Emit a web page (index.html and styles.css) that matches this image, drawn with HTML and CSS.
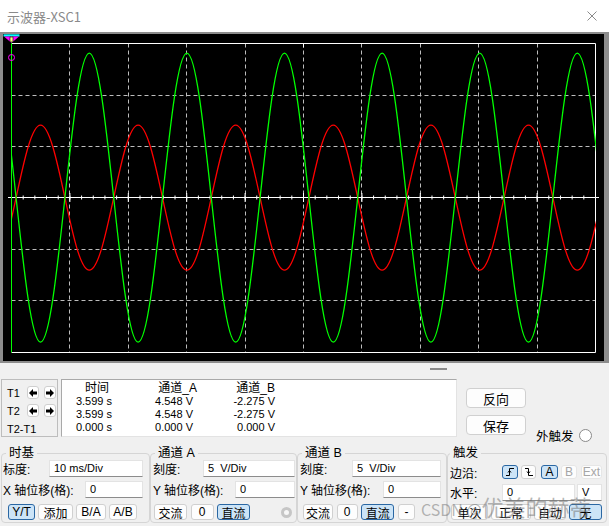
FILE: index.html
```html
<!DOCTYPE html>
<html lang="zh-CN">
<head>
<meta charset="utf-8">
<title>示波器-XSC1</title>
<link rel="stylesheet" href="styles.css">
</head>
<body>
<div class="win">
  <header class="titlebar">
    <span class="title">示波器-XSC1</span>
    <svg class="close" viewBox="0 0 10 10"><path d="M0.5 0.5L9.5 9.5M9.5 0.5L0.5 9.5"/></svg>
  </header>

  <div class="scope">
    <svg class="screen" width="601" height="327" viewBox="3 34 601 327">
      <defs><clipPath id="plot"><rect x="11.5" y="34" width="584.5" height="327"/></clipPath></defs>
      <path class="dash" d="M69.5 43.5V352.5M128.5 43.5V352.5M186.5 43.5V352.5M245.5 43.5V352.5M303.5 43.5V352.5M361.5 43.5V352.5M420.5 43.5V352.5M478.5 43.5V352.5M537.5 43.5V352.5"/>
      <path class="dash" d="M11.5 95.5H595.5M11.5 146.5H595.5M11.5 249.5H595.5M11.5 300.5H595.5"/>
      <path class="frame" d="M11.5 43.5H595.5V352.5H11.5"/>
      <path class="frame" d="M303.5 43.5V47.5"/>
      <line class="axis" x1="8" y1="197.5" x2="599" y2="197.5"/>
      <line class="ticks" x1="11" y1="197.5" x2="597" y2="197.5"/>
      <line class="ticks-major" x1="11" y1="197.5" x2="597" y2="197.5"/>
      <g clip-path="url(#plot)">
        <path class="wave-b" d="M-32.7 197.7c7.96,37.14 15.57,72.5 24.4,72.5c8.83,0 16.44,-35.36 24.4,-72.5c7.96,-37.14 15.57,-72.5 24.4,-72.5c8.83,0 16.44,35.36 24.4,72.5c7.96,37.14 15.57,72.5 24.4,72.5c8.83,0 16.44,-35.36 24.4,-72.5c7.96,-37.14 15.57,-72.5 24.4,-72.5c8.83,0 16.44,35.36 24.4,72.5c7.96,37.14 15.57,72.5 24.4,72.5c8.83,0 16.44,-35.36 24.4,-72.5c7.96,-37.14 15.57,-72.5 24.4,-72.5c8.83,0 16.44,35.36 24.4,72.5c7.96,37.14 15.57,72.5 24.4,72.5c8.83,0 16.44,-35.36 24.4,-72.5c7.96,-37.14 15.57,-72.5 24.4,-72.5c8.83,0 16.44,35.36 24.4,72.5c7.96,37.14 15.57,72.5 24.4,72.5c8.83,0 16.44,-35.36 24.4,-72.5c7.96,-37.14 15.57,-72.5 24.4,-72.5c8.83,0 16.44,35.36 24.4,72.5c7.96,37.14 15.57,72.5 24.4,72.5c8.83,0 16.44,-35.36 24.4,-72.5c7.96,-37.14 15.57,-72.5 24.4,-72.5c8.83,0 16.44,35.36 24.4,72.5c7.96,37.14 15.57,72.5 24.4,72.5c8.83,0 16.44,-35.36 24.4,-72.5c7.96,-37.14 15.57,-72.5 24.4,-72.5c8.83,0 16.44,35.36 24.4,72.5"/>
        <path class="wave-a" d="M-32.7 197.7c7.96,-74.03 15.57,-144.5 24.4,-144.5c8.83,0 16.44,70.47 24.4,144.5c7.96,74.03 15.57,144.5 24.4,144.5c8.83,0 16.44,-70.47 24.4,-144.5c7.96,-74.03 15.57,-144.5 24.4,-144.5c8.83,0 16.44,70.47 24.4,144.5c7.96,74.03 15.57,144.5 24.4,144.5c8.83,0 16.44,-70.47 24.4,-144.5c7.96,-74.03 15.57,-144.5 24.4,-144.5c8.83,0 16.44,70.47 24.4,144.5c7.96,74.03 15.57,144.5 24.4,144.5c8.83,0 16.44,-70.47 24.4,-144.5c7.96,-74.03 15.57,-144.5 24.4,-144.5c8.83,0 16.44,70.47 24.4,144.5c7.96,74.03 15.57,144.5 24.4,144.5c8.83,0 16.44,-70.47 24.4,-144.5c7.96,-74.03 15.57,-144.5 24.4,-144.5c8.83,0 16.44,70.47 24.4,144.5c7.96,74.03 15.57,144.5 24.4,144.5c8.83,0 16.44,-70.47 24.4,-144.5c7.96,-74.03 15.57,-144.5 24.4,-144.5c8.83,0 16.44,70.47 24.4,144.5c7.96,74.03 15.57,144.5 24.4,144.5c8.83,0 16.44,-70.47 24.4,-144.5c7.96,-74.03 15.57,-144.5 24.4,-144.5c8.83,0 16.44,70.47 24.4,144.5c7.96,74.03 15.57,144.5 24.4,144.5c8.83,0 16.44,-70.47 24.4,-144.5"/>
      </g>
      <line class="cursor" x1="11.5" y1="36" x2="11.5" y2="352.5"/>
      <circle class="cursor-ring" cx="11.5" cy="57.5" r="3"/>
      <rect class="mk-bar" x="3.5" y="34.3" width="16" height="2.2"/>
      <polygon class="mk-tri" points="4,36.5 19,36.5 11.5,43"/>
      <rect class="mk-tag" x="10" y="37" width="3" height="5"/>
    </svg>
  </div>

  <div class="splitter"><span class="grip"></span></div>

  <section class="cursor-row">
    <div class="tpanel">
      <div class="trow">
        <span class="tlabel">T1</span>
        <span class="arrow"><svg viewBox="0 0 8 8"><polygon points="0,4 4,0 4,2.5 8,2.5 8,5.5 4,5.5 4,8"/></svg></span>
        <span class="arrow"><svg viewBox="0 0 8 8"><polygon points="8,4 4,0 4,2.5 0,2.5 0,5.5 4,5.5 4,8"/></svg></span>
      </div>
      <div class="trow">
        <span class="tlabel">T2</span>
        <span class="arrow"><svg viewBox="0 0 8 8"><polygon points="0,4 4,0 4,2.5 8,2.5 8,5.5 4,5.5 4,8"/></svg></span>
        <span class="arrow"><svg viewBox="0 0 8 8"><polygon points="8,4 4,0 4,2.5 0,2.5 0,5.5 4,5.5 4,8"/></svg></span>
      </div>
      <div class="trow">
        <span class="tlabel">T2-T1</span>
      </div>
    </div>

    <div class="readout">
      <span class="h c1">时间</span><span class="h c2">通道_A</span><span class="h c3">通道_B</span>
      <span class="v c1">3.599 s</span><span class="v c2">4.548 V</span><span class="v c3">-2.275 V</span>
      <span class="v c1">3.599 s</span><span class="v c2">4.548 V</span><span class="v c3">-2.275 V</span>
      <span class="v c1">0.000 s</span><span class="v c2">0.000 V</span><span class="v c3">0.000 V</span>
    </div>

    <div class="actions">
      <div class="btncol">
        <span class="pbtn">反向</span>
        <span class="pbtn">保存</span>
      </div>
      <div class="ext"><span>外触发</span><span class="radio"></span></div>
    </div>
  </section>

  <section class="controls">
    <fieldset class="grp g-time">
      <legend>时基</legend>
      <div class="row r1"><span class="lbl">标度:</span><span class="field f-t1">10 ms/Div</span></div>
      <div class="row r2"><span class="lbl">X 轴位移(格):</span><span class="field f-t2">0</span></div>
      <div class="btnrow r3 br-time">
        <span class="sbtn on b27">Y/T</span><span class="sbtn b35">添加</span><span class="sbtn b30">B/A</span><span class="sbtn b28">A/B</span>
      </div>
    </fieldset>

    <fieldset class="grp g-a">
      <legend>通道 A</legend>
      <div class="row r1"><span class="lbl">刻度:</span><span class="field f-a1">5 &nbsp;V/Div</span></div>
      <div class="row r2"><span class="lbl">Y 轴位移(格):</span><span class="field f-a2">0</span></div>
      <div class="btnrow r3 br-a">
        <span class="sbtn b33">交流</span><span class="sbtn b23">0</span><span class="sbtn on b33">直流</span><span class="dot"></span>
      </div>
    </fieldset>

    <fieldset class="grp g-b">
      <legend>通道 B</legend>
      <div class="row r1"><span class="lbl">刻度:</span><span class="field f-b1">5 &nbsp;V/Div</span></div>
      <div class="row r2"><span class="lbl">Y 轴位移(格):</span><span class="field f-b2">0</span></div>
      <div class="btnrow r3 br-b">
        <span class="sbtn b30">交流</span><span class="sbtn b21">0</span><span class="sbtn on b33">直流</span><span class="sbtn b17">-</span>
      </div>
    </fieldset>

    <fieldset class="grp g-trig">
      <legend>触发</legend>
      <div class="row t1">
        <span class="lbl">边沿:</span>
        <span class="sbtn on e-rise"><svg class="edge" viewBox="0 0 10 10"><path d="M1 8.5H4.5V1.5H9M3 5.5L4.5 3.5L6 5.5"/></svg></span>
        <span class="sbtn e-fall"><svg class="edge" viewBox="0 0 10 10"><path d="M1 1.5H4.5V8.5H9M3 4.5L4.5 6.5L6 4.5"/></svg></span>
        <span class="sbtn on e-a">A</span>
        <span class="sbtn off e-b">B</span>
        <span class="sbtn off e-ext">Ext</span>
      </div>
      <div class="row t2"><span class="lbl">水平:</span><span class="field f-lv">0</span><span class="field f-unit">V</span></div>
      <div class="btnrow t3">
        <span class="sbtn b37">单次</span><span class="sbtn b40">正常</span><span class="sbtn b32">自动</span><span class="sbtn on b33">无</span>
      </div>
    </fieldset>
  </section>

  <div class="wm"><span class="wm-l">CSDN @</span>优美的赫蒂</div>
</div>
</body>
</html>
```

FILE: styles.css
```css
* { box-sizing: border-box; }

body {
  margin: 0;
  background: #f0f0f0;
  font-family: "Liberation Sans", "Noto Sans CJK SC", sans-serif;
  font-size: 12px;
  color: #000;
}

.win {
  position: relative;
  width: 609px;
  height: 526px;
  display: flex;
  flex-direction: column;
  background: #f0f0f0;
  overflow: hidden;
}

/* title bar */
.titlebar {
  flex: none;
  height: 32px;
  background: #fff;
  display: flex;
  align-items: center;
  padding: 0 12px 0 7px;
}
.title {
  font-family: "Noto Sans CJK SC", sans-serif;
  font-size: 13px;
  color: #8a8a8a;
}
.close {
  margin-left: auto;
  width: 10px;
  height: 10px;
  stroke: #8a8a8a;
  stroke-width: 1;
  fill: none;
}

/* scope screen */
.scope {
  flex: none;
  height: 331px;
  border-style: solid;
  border-color: #8c8c8c;
  border-width: 2px 5px 2px 3px;
  background: #000;
}
.screen { display: block; }
.dash { stroke: #bdbdbd; stroke-width: 1; stroke-dasharray: 4 3; fill: none; }
.frame { stroke: #fff; stroke-width: 1; fill: none; }
.axis { stroke: #fff; stroke-width: 1; }
.ticks { stroke: #fff; stroke-width: 4; stroke-dasharray: 1 10.68; }
.ticks-major { stroke: #fff; stroke-width: 9; stroke-dasharray: 1 57.4; }
.wave-a { stroke: #00ff00; stroke-width: 1.3; fill: none; }
.wave-b { stroke: #ff0000; stroke-width: 1.3; fill: none; }
.cursor { stroke: #00ff00; stroke-width: 1; }
.cursor-ring { stroke: #ff00ff; stroke-width: 1; fill: none; }
.mk-bar { fill: #00ffff; }
.mk-tri { fill: #ff00ff; }
.mk-tag { fill: #ffff80; stroke: #000; stroke-width: 0.6; }

/* splitter */
.splitter {
  flex: none;
  height: 16px;
  padding: 5px 0 0 430px;
}
.grip {
  display: block;
  width: 17px;
  height: 2px;
  background: #8a8a8a;
}

/* cursor readout row */
.cursor-row {
  flex: none;
  height: 58px;
  display: flex;
  padding-left: 1px;
}
.tpanel {
  width: 57px;
  border: 1px solid #bdbdbd;
  padding: 6px 0 0 5px;
  display: flex;
  flex-direction: column;
}
.trow {
  display: flex;
  align-items: center;
  height: 13px;
}
.trow + .trow { margin-top: 5px; }
.tlabel {
  width: 20px;
  font-size: 11px;
  white-space: nowrap;
}
.arrow {
  width: 12px;
  height: 13px;
  background: #fff;
  border: 1px solid #cfcfcf;
  border-radius: 3px;
  display: flex;
  align-items: center;
  justify-content: center;
}
.arrow + .arrow { margin-left: 5px; }
.arrow svg { width: 8px; height: 8px; fill: #000; }

.readout {
  margin-left: 3px;
  width: 396px;
  background: #fff;
  border: 1px solid #a9a9a9;
  border-right-color: #e3e3e3;
  border-bottom-color: #e3e3e3;
  padding-top: 1px;
  display: grid;
  grid-template-columns: 52px 83px 80px;
  grid-template-rows: 14px;
  grid-auto-rows: 13px;
  align-content: start;
}
.h {
  font-size: 12px;
  line-height: 14px;
  text-align: right;
  white-space: nowrap;
}
.v {
  font-size: 11px;
  line-height: 13px;
  text-align: right;
  white-space: nowrap;
}
.h.c1 { padding-right: 5px; }
.h.c2 { padding-right: 0; }
.h.c3 { padding-right: 2px; }
.v.c1 { padding-right: 2px; }
.v.c2 { padding-right: 4px; }
.v.c3 { padding-right: 2px; }

.actions {
  display: flex;
  padding-left: 9px;
}
.btncol {
  display: flex;
  flex-direction: column;
  padding-top: 9px;
  gap: 7px;
}
.pbtn {
  width: 60px;
  height: 20px;
  border: 1px solid #d0d0d0;
  border-radius: 4px;
  background: #fdfdfd;
  font-size: 13px;
  display: flex;
  align-items: center;
  justify-content: center;
}
.ext {
  display: flex;
  align-items: center;
  gap: 5px;
  height: 16px;
  margin: 48px 0 0 10px;
  font-size: 12.5px;
  white-space: nowrap;
}
.radio {
  width: 13px;
  height: 13px;
  border: 1px solid #8a8a8a;
  border-radius: 50%;
  background: #fff;
}

/* control groups */
.controls {
  flex: none;
  display: flex;
  padding: 9px 0 0 1px;
}
.grp {
  margin: 0;
  min-width: 0;
  height: 77px;
  border: 1px solid #d5d5d5;
  border-radius: 4px;
  padding: 0 6px 0 1px;
}
.grp legend {
  padding: 0 3px;
  margin-left: 3px;
  font-size: 12.5px;
  line-height: 14px;
}
.g-time { width: 149px; padding: 0 6px 0 1px; }
.g-a { width: 147px; padding: 0 1px 0 2px; }
.g-a legend { margin-left: 2px; }
.g-b { width: 150px; padding: 0 5px 0 2px; }
.g-b legend { margin-left: 2px; }
.g-trig { width: 160px; padding: 0 4px 0 2px; }
.g-trig legend { margin-left: 0; }

.row {
  display: flex;
  align-items: center;
  height: 17px;
}
.lbl {
  font-size: 12px;
  white-space: nowrap;
}
.r2 { margin-top: 4px; }
.r3 { margin-top: 6px; }

.field {
  margin-left: auto;
  height: 17px;
  background: #fff;
  border: 1px solid #e3e3e3;
  border-bottom-color: #8c8c8c;
  padding-left: 4px;
  font-size: 11px;
  line-height: 15px;
  white-space: nowrap;
}
.f-t1 { width: 94px; }
.f-t2 { width: 58px; }
.f-a1 { width: 92px; }
.f-a2 { width: 60px; }
.f-b1 { width: 89px; }
.f-b2 { width: 58px; }
.f-lv { width: 73px; }
.f-unit { width: 25px; margin-left: 2px; }

.btnrow {
  display: flex;
  align-items: center;
  height: 16px;
  gap: 3px;
}
.br-time { padding-left: 5px; }
.br-a { padding-left: 1px; gap: 3.5px; }
.br-b { padding-left: 3px; gap: 3.7px; }

.sbtn {
  flex: none;
  height: 16px;
  border: 1px solid #d0d0d0;
  border-radius: 3px;
  background: #fdfdfd;
  font-size: 12px;
  display: flex;
  align-items: center;
  justify-content: center;
  white-space: nowrap;
}
.sbtn.on {
  background: #cce4f7;
  border-color: #2a67a3;
}
.sbtn.off {
  color: #a6a6a6;
  border-color: #e6e6e6;
}
.b17 { width: 17px; }
.b21 { width: 21px; }
.b23 { width: 23px; }
.b27 { width: 27px; }
.b28 { width: 28px; }
.b30 { width: 30px; }
.b32 { width: 32px; }
.b33 { width: 33px; }
.b35 { width: 35px; }
.b37 { width: 37px; }
.b40 { width: 40px; }

.dot {
  width: 11px;
  height: 11px;
  margin-left: 27px;
  border-radius: 50%;
  border: 3px solid #c6c6c6;
  background: #f7f7f7;
}

/* trigger group rows */
.t1 { margin-top: 5px; height: 14px; }
.t1 .sbtn { height: 14px; }
.t2 { margin-top: 5px; }
.t3 { margin-top: 3px; padding-left: 1px; }
.e-rise { width: 16px; margin-left: auto; }
.e-fall { width: 15px; margin-left: 3px; }
.e-a { width: 17px; margin-left: 5px; }
.e-b { width: 16px; margin-left: 3px; }
.e-ext { width: 21px; margin-left: 4px; }
.edge {
  width: 10px;
  height: 10px;
  fill: none;
  stroke: #000;
  stroke-width: 1;
}

/* watermark overlay */
.wm {
  position: absolute;
  left: 421px;
  top: 493px;
  font-family: "Noto Sans CJK SC", sans-serif;
  font-size: 22px;
  line-height: 26px;
  color: rgba(110, 110, 110, 0.5);
  white-space: nowrap;
  pointer-events: none;
}
.wm-l { font-size: 16px; }
```
